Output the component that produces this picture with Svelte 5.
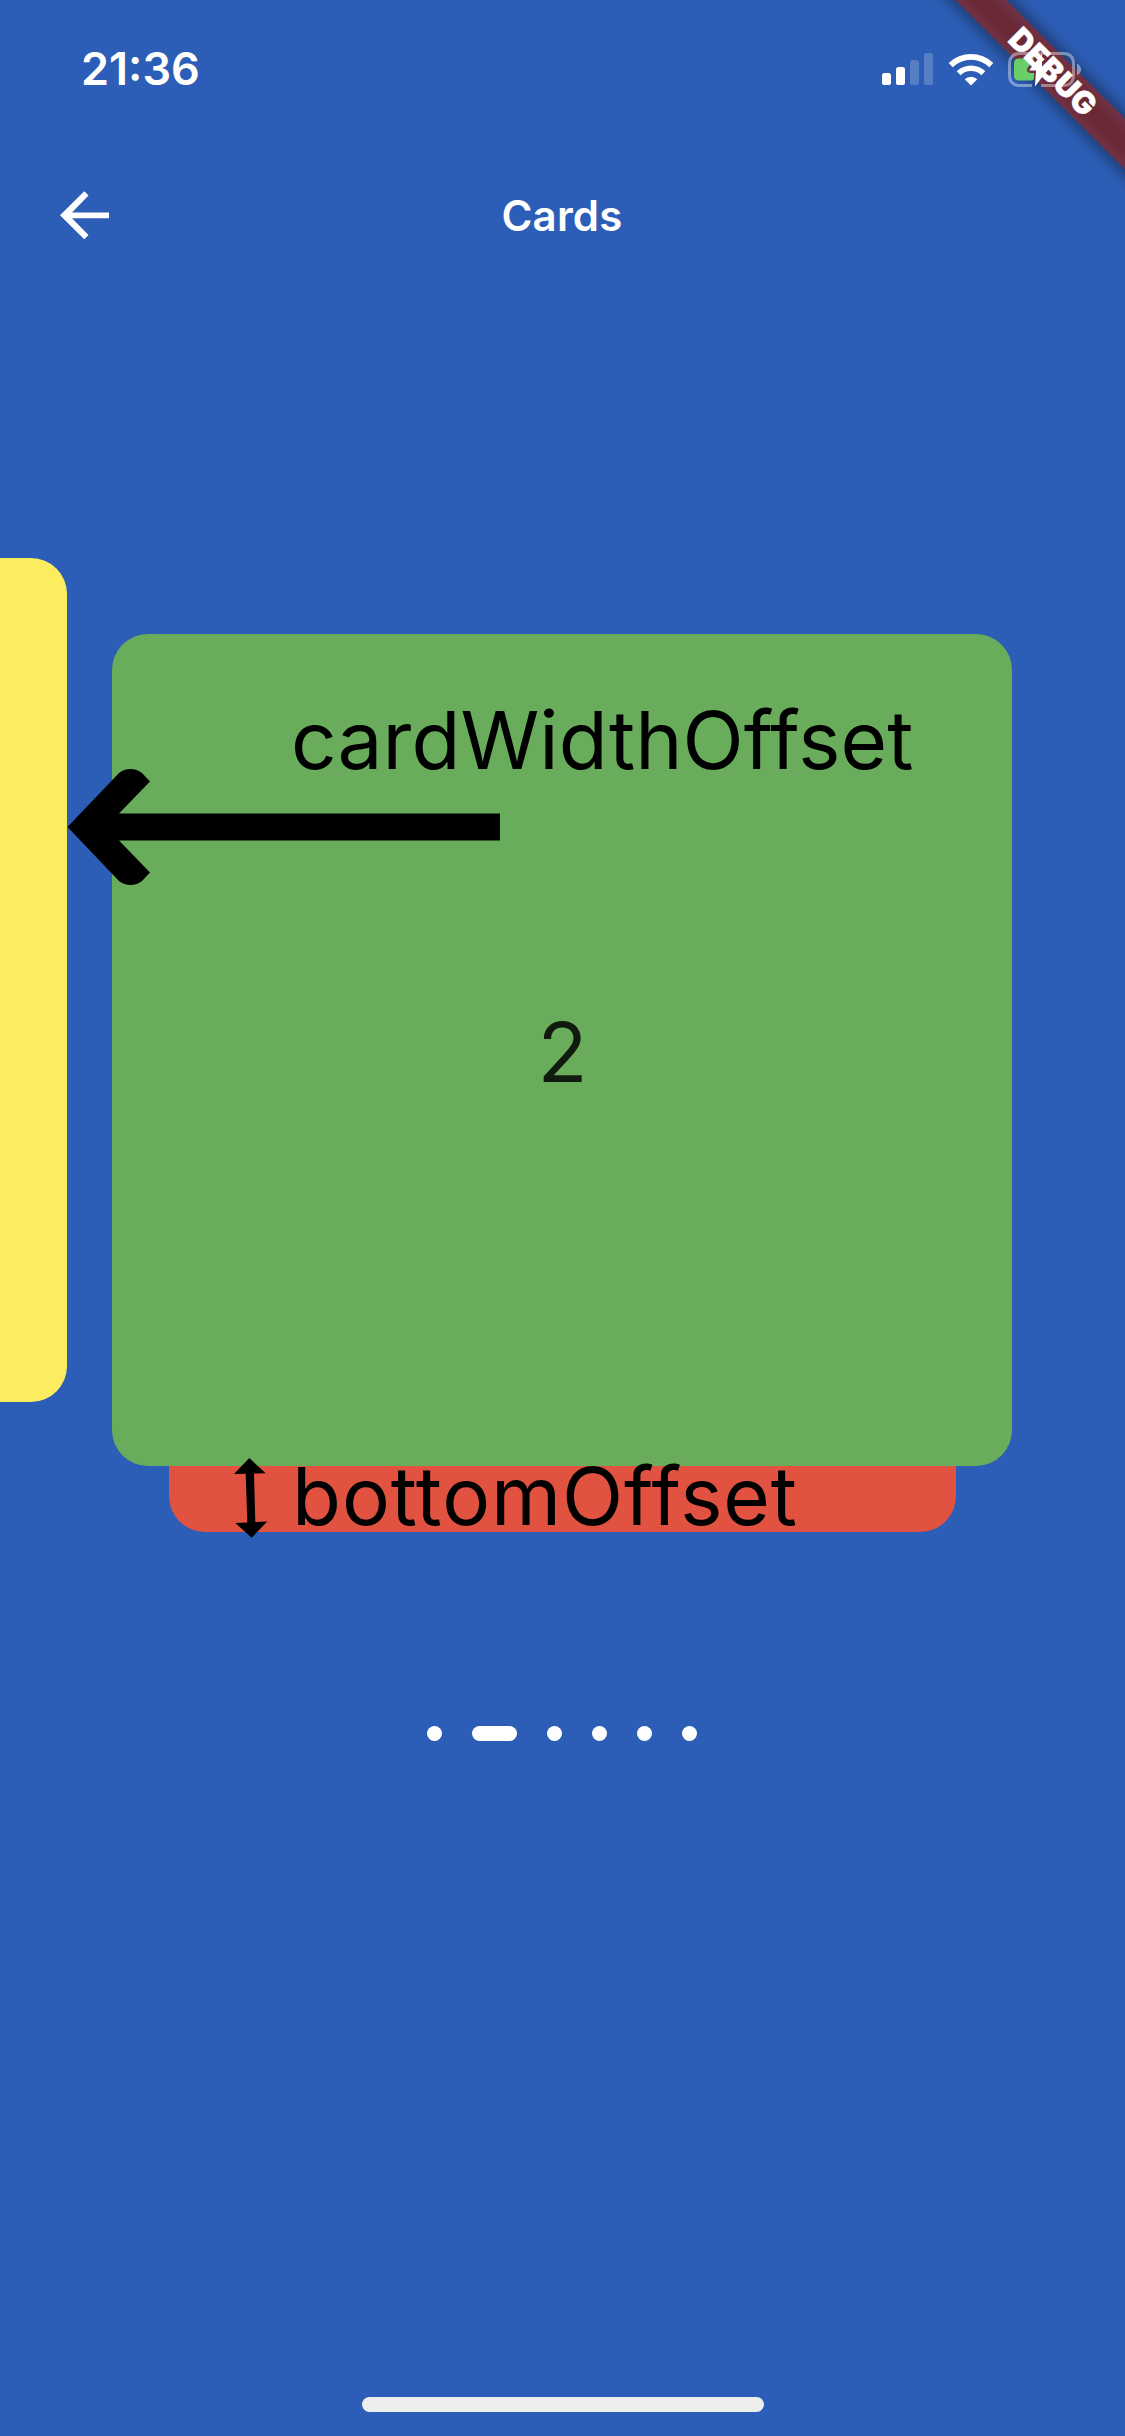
<script>
  const pages = 6;
  const current = 1;
</script>

<div class="screen">
  <header class="status">
    <span class="time">21:36</span>
    <div class="indicators">
      <svg class="signal" viewBox="0 0 52 34">
        <rect x="0" y="21" width="9" height="12" rx="2.6" />
        <rect x="14" y="15" width="9" height="18" rx="2.6" />
        <rect class="dim" x="28" y="8" width="9" height="25" rx="2.6" />
        <rect class="dim" x="42" y="1" width="9" height="32" rx="2.6" />
      </svg>
      <svg class="wifi" viewBox="0 0 46 34">
        <path d="M23 33.5 L16.7 27.2 A9 9 0 0 1 29.3 27.2 Z" />
        <path d="M12.6 23.2 L8.7 19.2 A20.5 20.5 0 0 1 37.3 19.2 L33.4 23.2 A15 15 0 0 0 12.6 23.2 Z" />
        <path d="M4.7 15.2 L0.7 11 A32 32 0 0 1 45.3 11 L41.3 15.2 A26.3 26.3 0 0 0 4.7 15.2 Z" />
      </svg>
      <svg class="battery" viewBox="0 0 74 36">
        <path class="shell" d="M24 34.5 H12 Q1.5 34.5 1.5 24 V13 Q1.5 2.5 12 2.5 H55 Q65.500 2.500 65.500 13 V24 Q65.500 34.500 55 34.500 H33" />
        <path class="cap" d="M69 12.500 Q73 15 73 18.500 Q73 22 69 24.500 Z" />
        <path class="charge" d="M11 7.500 H26 L19 18 Q18.500 21 21.500 22 H26 V26 Q26 29.500 23 29.500 H11 Q6 29.500 6 24.500 V12.500 Q6 7.500 11 7.500 Z" />
        <path class="bolt" d="M34 3 L21 19.500 H28 L27 35.500 L41 17 H34 Z" />
      </svg>
    </div>
  </header>

  <nav class="bar">
    <svg class="back" viewBox="0 0 49 49">
      <path d="M49 21.500 H12 L28.500 4.500 L24.300 0.300 L0 24.300 L24.300 48.300 L28.500 44.100 L12 27.300 H49 Z" />
    </svg>
    <h1>Cards</h1>
    <span></span>
  </nav>

  <main class="deck">
    <div class="card yellow"></div>
    <div class="card red"></div>
    <div class="card green">2</div>
    <span class="note width-note">cardWidthOffset</span>
    <svg class="arrow-left" viewBox="0 0 433 118">
      <path d="M433 45.500 H52 L83 13.500 L75 5 Q70 1 63.500 1 Q57 1 52 5 L0.500 59 L52 113 Q57 117 63.500 117 Q70 117 75 113 L83 104.500 L52 72.500 H433 Z" />
    </svg>
    <span class="note bottom-note">bottomOffset</span>
    <svg class="arrow-updown" viewBox="0 0 34 80">
      <path d="M15.300 0 L31.700 15.300 L20 15.600 L21.300 64 L33.300 63.400 L17.700 79.700 L1.300 65 L13.300 64.500 L11.700 15.800 L0 16 Z" />
    </svg>
  </main>

  <div class="dots">
    {#each Array(pages) as _, i}
      <span class="dot" class:active={i === current}></span>
    {/each}
  </div>

  <footer><span class="home"></span></footer>

  <div class="corner">
    <div class="ribbon-shadow"></div>
    <div class="ribbon"></div>
    <div class="ribbon-text">DEBUG</div>
  </div>
</div>

<style>
  :global(body) {
    background: #2d5eb7;
  }
  .screen {
    position: relative;
    width: 1125px;
    height: 2436px;
    overflow: hidden;
    display: flex;
    flex-direction: column;
    background: #2d5eb7;
    color: #fff;
    font-family: Inter, "Liberation Sans", sans-serif;
  }
  svg {
    display: block;
    fill: #fff;
  }
  .status {
    height: 132px;
    box-sizing: border-box;
    padding: 50px 43px 0 81px;
    display: flex;
    justify-content: space-between;
    align-items: flex-start;
  }
  .indicators {
    position: relative;
    z-index: 3;
    display: flex;
    align-items: flex-start;
  }
  .time {
    font-size: 45px;
    font-weight: 600;
    line-height: 38px;
  }
  .signal {
    width: 52px;
    height: 34px;
    margin: 2px 14px 0 0;
  }
  .dim {
    opacity: 0.2;
  }
  .wifi {
    width: 46px;
    height: 34px;
    margin: 1.5px 14px 0 0;
  }
  .battery {
    width: 74px;
    height: 36px;
    margin-top: 0.5px;
  }
  .shell {
    fill: none;
    stroke: #fff;
    stroke-width: 3;
    opacity: 0.4;
  }
  .cap {
    opacity: 0.45;
  }
  .charge {
    fill: #69ce67;
  }
  .bar {
    height: 167px;
    padding: 0 61px 0 60px;
    display: grid;
    grid-template-columns: 1fr auto 1fr;
    align-items: center;
  }
  .back {
    width: 49px;
    height: 49px;
  }
  h1 {
    margin: 0;
    font-size: 42px;
    font-weight: 600;
    line-height: 50px;
    letter-spacing: 0.2px;
  }
  .deck {
    position: relative;
    display: grid;
    height: 974px;
    margin-top: 259px;
    grid-template-columns: 67.4px 45px 56.25px 787.5px 56.25px 112.5px;
    grid-template-rows: 76px 768px 64.4px 66px;
  }
  .card {
    border-radius: 36px;
  }
  .yellow {
    grid-area: 1 / 1 / 3 / 2;
    border-radius: 0 36px 36px 0;
    background: #fced60;
  }
  .red {
    grid-area: 2 / 4 / 5 / 5;
    background: #e15241;
  }
  .green {
    grid-area: 2 / 2 / 4 / 6;
    margin-left: 45px;
    padding-top: 5px;
    background: #69ad5c;
    display: flex;
    align-items: center;
    justify-content: center;
    color: #101a0e;
    font-size: 82px;
  }
  .note {
    position: absolute;
    color: #000;
    font-size: 80px;
    line-height: 100px;
    white-space: nowrap;
  }
  .width-note {
    left: 291px;
    top: 132px;
    letter-spacing: 0.06px;
  }
  .bottom-note {
    left: 292px;
    top: 888px;
    letter-spacing: 0.9px;
  }
  .arrow-left,
  .arrow-updown {
    position: absolute;
    fill: #000;
  }
  .arrow-left {
    left: 67px;
    top: 210px;
    width: 433px;
    height: 118px;
  }
  .arrow-updown {
    left: 233.700px;
    top: 899.500px;
    width: 34px;
    height: 80px;
  }
  .dots {
    display: flex;
    justify-content: center;
    gap: 30px;
    margin-top: 194px;
    padding-right: 1px;
  }
  .dot {
    width: 15px;
    height: 15px;
    border-radius: 8px;
    background: #fff;
  }
  .dot.active {
    width: 45px;
  }
  footer {
    margin-top: auto;
    padding-bottom: 24px;
    display: flex;
    justify-content: center;
  }
  .home {
    width: 402px;
    height: 15px;
    border-radius: 8px;
    background: #eee;
  }
  .corner {
    position: absolute;
    top: 0;
    right: 0;
    width: 300px;
    height: 300px;
    overflow: hidden;
  }
  .ribbon-shadow,
  .ribbon,
  .ribbon-text {
    position: absolute;
    left: 108px;
    top: 54px;
    width: 240px;
    height: 36px;
    transform: rotate(45deg);
  }
  .ribbon-shadow {
    left: 78px;
    width: 300px;
    background: rgba(0, 0, 0, 0.6);
    filter: blur(10px);
  }
  .ribbon {
    background: rgba(160, 42, 38, 0.627);
  }
  .ribbon-text {
    z-index: 4;
    text-align: center;
    font-size: 31px;
    font-weight: 900;
    line-height: 36px;
    letter-spacing: 0.4px;
    -webkit-text-stroke: 0.4px #fff;
  }
</style>
